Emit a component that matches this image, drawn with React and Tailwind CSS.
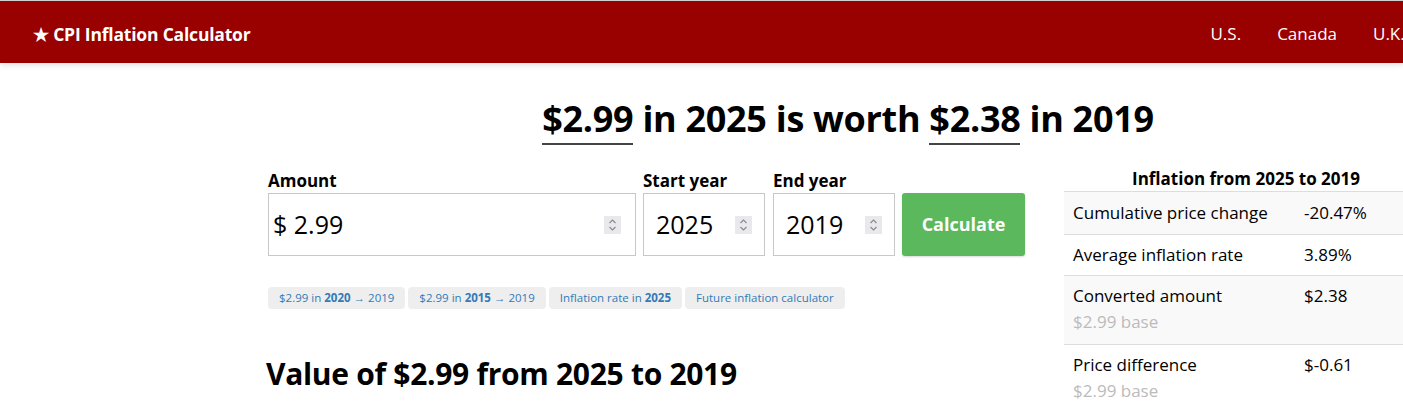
import React from "react";

function Spinner() {
  return (
    <div className="flex h-[18px] w-[17px] flex-col items-center justify-center bg-[#e9e9ed]">
      <svg width="9" height="14" viewBox="0 0 9 14" fill="none" stroke="#8a8a90" strokeWidth="1.2">
        <path d="M1.5 5 L4.5 2 L7.5 5" />
        <path d="M1.5 9 L4.5 12 L7.5 9" />
      </svg>
    </div>
  );
}

function Chip({ children }) {
  return (
    <span className="flex h-[22px] items-center rounded-[4px] bg-[#eeeeee] px-[11px] text-[11.5px] text-[#337ab7]">
      {children}
    </span>
  );
}

export default function App() {
  const font = { fontFamily: '"Open Sans", "Noto Sans", sans-serif' };
  return (
    <div className="h-[407px] w-[1403px] overflow-hidden bg-white text-black" style={font}>
      <div className="border-t border-[#d0d0d0] bg-[#990000] shadow-[0_2px_6px_rgba(0,0,0,0.12)]">
        <div className="flex h-[62px] items-center justify-between pl-[33px] pt-[4px]">
          <span className="text-[17.5px] font-bold tracking-[-0.2px] text-white">★ CPI Inflation Calculator</span>
          <div className="flex gap-[36px] text-[17px] text-white">
            <span>U.S.</span>
            <span>Canada</span>
            <span className="w-[30px]">U.K.</span>
          </div>
        </div>
      </div>

      <div className="ml-[268px] w-[1160px]">
        <h1 className="mt-[32px] text-center text-[36px] font-bold leading-[48px] tracking-[-0.3px]">
          <span className="border-b-2 border-[#444]">$2.99</span> in 2025 is worth{" "}
          <span className="border-b-2 border-[#444]">$2.38</span> in 2019
        </h1>

        <div className="mt-[26px] flex gap-[39px]">
          <div className="w-[757px]">
            <div className="flex items-end gap-[7px]">
              <div className="w-[368px]">
                <div className="text-[17px] font-bold leading-[24px]">Amount</div>
                <div className="flex h-[63px] items-center justify-between border border-[#c8c8c8] pl-[4px] pr-[14px] text-[25px]">
                  <span>$ 2.99</span>
                  <Spinner />
                </div>
              </div>
              <div className="w-[122px]">
                <div className="text-[17px] font-bold leading-[24px]">Start year</div>
                <div className="flex h-[63px] items-center justify-between border border-[#c8c8c8] pl-[12px] pr-[12px] text-[25px]">
                  <span>2025</span>
                  <Spinner />
                </div>
              </div>
              <div className="ml-[1px] w-[122px]">
                <div className="text-[17px] font-bold leading-[24px]">End year</div>
                <div className="flex h-[63px] items-center justify-between border border-[#c8c8c8] pl-[12px] pr-[12px] text-[25px]">
                  <span>2019</span>
                  <Spinner />
                </div>
              </div>
              <button className="flex h-[63px] w-[123px] items-center justify-center rounded-[3px] bg-[#5cb85c] text-[18px] font-bold text-white shadow-[0_1px_2px_rgba(0,0,0,0.15)]">
                Calculate
              </button>
            </div>

            <div className="mt-[31px] flex gap-[3px]">
              <Chip>$2.99 in&nbsp;<b>2020</b>&nbsp;→ 2019</Chip>
              <Chip>$2.99 in&nbsp;<b>2015</b>&nbsp;→ 2019</Chip>
              <Chip>Inflation rate in&nbsp;<b>2025</b></Chip>
              <Chip>Future inflation calculator</Chip>
            </div>

            <h2 className="-ml-[2px] mt-[45px] text-[30px] font-bold leading-[40px] tracking-[-0.3px]">
              Value of $2.99 from 2025 to 2019
            </h2>
          </div>

          <div className="-mt-[2px] w-[364px]">
            <div className="text-center text-[17px] font-bold leading-[24px]">Inflation from 2025 to 2019</div>
            <div className="text-[17px] leading-[24px]">
              <div className="flex border-t border-[#dddddd] bg-[#f9f9f9] py-[9px]">
                <div className="w-[232px] pl-[9px]">Cumulative price change</div>
                <div className="pl-[8px]">-20.47%</div>
              </div>
              <div className="flex border-t border-[#dddddd] bg-white py-[8px]">
                <div className="w-[232px] pl-[9px]">Average inflation rate</div>
                <div className="pl-[8px]">3.89%</div>
              </div>
              <div className="flex border-t border-[#dddddd] bg-[#f9f9f9] pb-[10px] pt-[8px]">
                <div className="w-[232px] pl-[9px]">
                  <div>Converted amount</div>
                  <div className="mt-[2px] text-[#bbbbbb]">$2.99 base</div>
                </div>
                <div className="pl-[8px]">$2.38</div>
              </div>
              <div className="flex border-t border-[#dddddd] bg-white pb-[10px] pt-[8px]">
                <div className="w-[232px] pl-[9px]">
                  <div>Price difference</div>
                  <div className="mt-[2px] text-[#bbbbbb]">$2.99 base</div>
                </div>
                <div className="pl-[8px]">$-0.61</div>
              </div>
            </div>
          </div>
        </div>
      </div>
    </div>
  );
}
